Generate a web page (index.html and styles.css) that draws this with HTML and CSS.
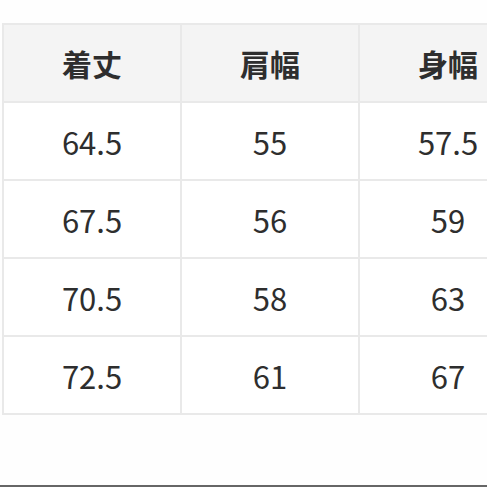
FILE: index.html
```html
<!DOCTYPE html>
<html lang="ja">
<head>
<meta charset="utf-8">
<link rel="stylesheet" href="styles.css">
</head>
<body>
<div class="page">
  <table class="size-table">
    <colgroup>
      <col class="col"><col class="col"><col class="col">
    </colgroup>
    <thead>
      <tr><th>着丈</th><th>肩幅</th><th>身幅</th></tr>
    </thead>
    <tbody>
      <tr><td>64.5</td><td>55</td><td>57.5</td></tr>
      <tr><td>67.5</td><td>56</td><td>59</td></tr>
      <tr><td>70.5</td><td>58</td><td>63</td></tr>
      <tr><td>72.5</td><td>61</td><td>67</td></tr>
    </tbody>
  </table>
  <div class="rule"></div>
</div>
</body>
</html>
```

FILE: styles.css
```css
html, body {
  margin: 0;
  padding: 0;
  overflow: hidden;
  background: #fefefe;
}
.page {
  width: 487px;
  height: 487px;
  display: flex;
  flex-direction: column;
  overflow: hidden;
}
.size-table {
  margin: 23px 0 0 2px;
  border-collapse: collapse;
  table-layout: fixed;
  width: 534px;
  flex: none;
  font-family: "Noto Sans CJK JP", "Noto Sans", sans-serif;
  color: #2e2e2e;
}
.col {
  width: 178px;
}
.size-table th,
.size-table td {
  border: 2px solid #e9e9e9;
  text-align: center;
  padding: 0;
}
.size-table th {
  height: 76px;
  background: #f4f4f4;
  font-size: 30px;
  font-weight: 700;
}
.size-table td {
  height: 76px;
  background: #fff;
  font-size: 31px;
  font-weight: 400;
}
.rule {
  margin-top: auto;
  height: 2px;
  background: #666;
}
```
